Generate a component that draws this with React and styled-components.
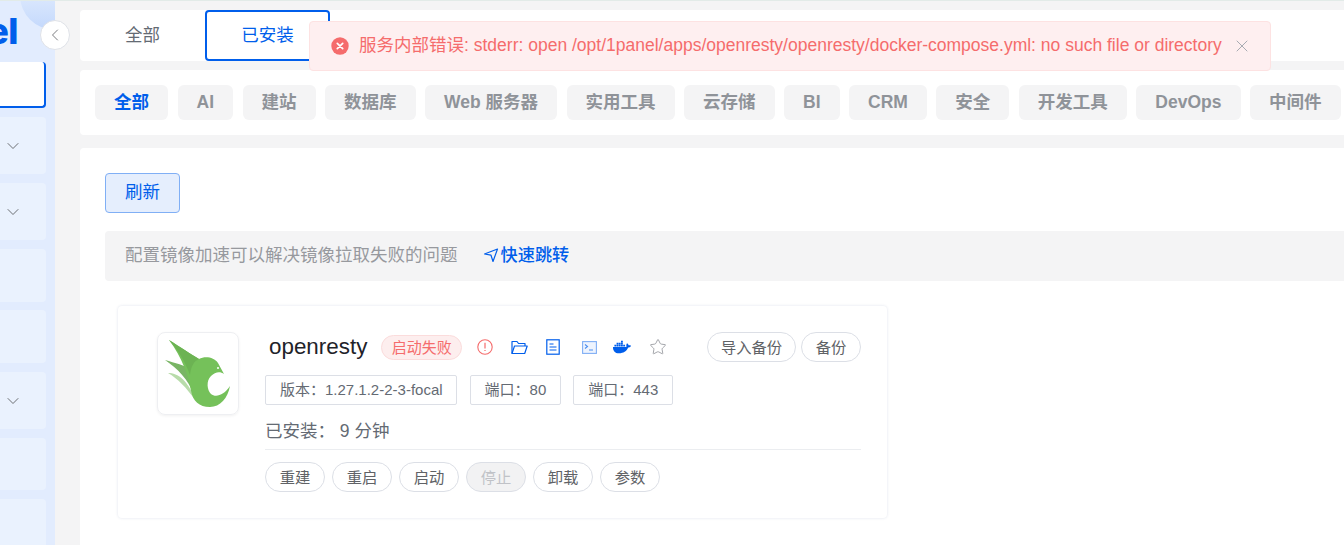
import React from 'react';
import styled, { createGlobalStyle } from 'styled-components';
import { ChevronDown, ChevronLeft, X, Star } from 'lucide-react';
import { FaDocker } from 'react-icons/fa';

const Global = createGlobalStyle`
  html, body { margin: 0; padding: 0; height: 100%; overflow: hidden; }
  body { font-family: "Liberation Sans", "Noto Sans CJK SC", sans-serif; background: #f4f4f5; }
  * { box-sizing: border-box; }
`;

const Page = styled.div`
  width: 1344px; height: 545px; display: flex; overflow: hidden; position: relative;
  border-top: 1px solid #e2ebe8; background: #f4f4f5;
`;
const Sidebar = styled.aside`
  width: 55px; flex: none; background: #e2ecfe; display: flex; flex-direction: column;
  padding-right: 9px; position: relative; overflow: hidden;
`;
const LogoBlob = styled.div`
  position: absolute; width: 70px; height: 70px; border-radius: 50%; left: 20px; top: -41px;
  background: linear-gradient(180deg, #e6effe 30%, #c3d8fc 100%);
`;
const LogoText = styled.div`
  height: 61px; flex: none; width: 18px; padding-top: 8px; font: 800 36px/44px "Inter", sans-serif; color: #005eeb;
  display: flex; justify-content: flex-end; letter-spacing: -0.5px; position: relative; white-space: nowrap;
`;
const Menu = styled.div`display: flex; flex-direction: column;`;
const MenuItem = styled.div`
  height: ${p => p.$h}px; margin-bottom: ${p => p.$gap}px; flex: none;
  background: ${p => p.$active ? '#fff' : '#eaf2fe'};
  border: ${p => p.$active ? '2px solid #005eeb' : '0'}; border-left: 0; border-top: 0;
  border-radius: 0 4px 4px 0; display: flex; align-items: center; justify-content: flex-end;
  padding-right: 23px; color: #606266;
`;
const Collapse = styled.div`
  position: absolute; left: 40px; top: 19px; width: 30px; height: 30px; border-radius: 50%;
  background: #fff; border: 1px solid #dfe2e8; display: flex; align-items: center; justify-content: center;
  color: #606266; z-index: 3;
`;
const Main = styled.main`
  flex: 1; min-width: 0; padding: 9px 0 0 25px; display: flex; flex-direction: column; gap: 9px;
`;
const TabCard = styled.div`
  height: 51px; flex: none; background: #fff; border-radius: 4px 0 0 4px; display: flex;
`;
const Tab = styled.div`
  width: 125px; height: 51px; display: flex; align-items: center; justify-content: center; font-size: 17.5px; padding-bottom: 5px;
  color: ${p => p.$active ? '#005eeb' : '#646a73'}; border-radius: 4px;
  border: ${p => p.$active ? '2px solid #005eeb' : '0'};
`;
const FilterCard = styled.div`
  height: 65px; flex: none; background: #fff; border-radius: 4px 0 0 4px; display: flex; align-items: center;
  gap: 9.5px; padding: 0 0 0 15px; overflow: hidden;
`;
const Pill = styled.div`
  height: 35px; flex: none; padding: 0 19px ${p => p.$latin ? 0 : 4}px; border-radius: 6px; background: #f4f4f5;
  color: ${p => p.$active ? '#005eeb' : '#8f9399'}; font-size: 17.5px; font-weight: 700;
  display: flex; align-items: center;
`;
const Content = styled.div`
  flex: 1; margin-top: 4px; background: #fff; border-radius: 4px 0 0 0; padding: 25px 0 0 25px;
`;
const Refresh = styled.button`
  display: block; width: 75px; height: 40px; background: #e5eefd; border: 1px solid #80aff5; border-radius: 4px;
  color: #005eeb; font: 17.5px "Liberation Sans", "Noto Sans CJK SC", sans-serif; padding: 0 0 6px;
`;
const Notice = styled.div`
  margin-top: 18px; height: 50px; background: #f4f4f5; border-radius: 4px 0 0 4px; display: flex; align-items: center;
  padding: 0 0 6px 20px; font-size: 17.5px; color: #97999e;
`;
const JumpLink = styled.span`
  margin-left: 25px; color: #005eeb; display: flex; align-items: center; font-size: 17.2px; font-weight: 500; font-family: "Noto Sans CJK SC", sans-serif;
`;
const AppCard = styled.div`
  margin: 25px 0 0 13px; width: 769px; height: 212px; background: #fff; border-radius: 4px;
  box-shadow: 0 0 3px rgba(30, 60, 120, .14); display: flex; padding: 26px 26px 0 39px;
`;
const IconBox = styled.div`
  width: 82px; height: 83px; flex: none; border: 1px solid #eeeff2; border-radius: 8px; box-shadow: 0 1px 3px rgba(0,0,0,.06);
  display: flex; align-items: center; justify-content: center;
`;
const Info = styled.div`flex: 1; margin-left: 26px; display: flex; flex-direction: column;`;
const TitleRow = styled.div`display: flex; align-items: center; height: 30px;`;
const Name = styled.div`font-size: 22.4px; color: #1f2329; margin: 0 14px 0 4px; line-height: 28px;`;
const Status = styled.div`
  height: 25px; width: 81px; border-radius: 13px; background: #fdeeee; border: 1px solid #fbdcdc; color: #f56c6c;
  font-size: 15px; display: flex; align-items: center; justify-content: center; flex: none; margin-right: 14px; padding-bottom: 2px;
`;
const IconSlot = styled.span`
  width: 18px; height: 18px; display: flex; align-items: center; justify-content: center; margin-right: ${p => p.$gap ?? 16}px; flex: none;
`;
const Spacer = styled.div`flex: 1;`;
const RoundBtn = styled.div`
  height: 30px; width: ${p => p.$w ?? 60}px; border-radius: 15px; border: 1px solid #dcdfe6; display: flex; align-items: center; justify-content: center;
  font-size: 15.3px; flex: none; padding-bottom: 2px;
  color: ${p => p.$disabled ? '#c0c2c7' : '#606266'}; background: ${p => p.$disabled ? '#f2f2f3' : '#fff'};
`;
const BtnGroup = styled.div`display: flex; gap: ${p => p.$gap ?? 7}px;`;
const TagRow = styled.div`display: flex; gap: 12.5px; margin-top: 13px;`;
const Tag = styled.div`
  height: 30px; padding: 0 13.5px 4px 14px; border: 1px solid #dcdfe6; border-radius: 2px; font-size: 15px; color: #646a73;
  display: flex; align-items: center; background: #fff; white-space: nowrap;
`;
const Installed = styled.div`
  margin-top: 15px; height: 30px; font-size: 17.5px; color: #646a73; border-bottom: 1px solid #ebedf0; white-space: pre; line-height: 22px;
`;
const Actions = styled(BtnGroup)`margin-top: 12px;`;
const Toast = styled.div`
  position: absolute; left: 309px; top: 20px; width: 962px; height: 50px; background: #feeff0; border: 1px solid #fde2e2; border-radius: 4px;
  display: flex; align-items: center; padding: 0 0 0 21px; color: #f56c6c; font-size: 17.5px; z-index: 5;
`;
const ToastText = styled.span`margin: 0 0 5px 10px; white-space: nowrap;`;
const ToastClose = styled.span`margin-left: 10px; color: #a8abb2; display: flex;`;

const ErrorDot = () => (
  <svg width="18" height="18" viewBox="0 0 18 18" style={{ flex: 'none' }}>
    <circle cx="9" cy="9" r="8.7" fill="#f56c6c" />
    <path d="M6.3 6.3l5.4 5.4M11.7 6.3l-5.4 5.4" stroke="#fff" strokeWidth="1.7" strokeLinecap="round" />
  </svg>
);
const Warn = () => (
  <svg width="16" height="16" viewBox="0 0 16 16" fill="none">
    <circle cx="8" cy="8" r="7.2" stroke="#f56c6c" strokeWidth="1.1" />
    <path d="M8 3.8v5.6M8 11v1.1" stroke="#f56c6c" strokeWidth="1.2" />
  </svg>
);
const Folder = () => (
  <svg width="17" height="15" viewBox="0 0 17 15" fill="none" stroke="#005eeb" strokeWidth="1.2" strokeLinejoin="round">
    <path d="M1 13.5V1.5h5l1.5 2h6.5v2.5" />
    <path d="M1 13.5L3.5 6h12.7l-2.5 7.5z" />
  </svg>
);
const Doc = () => (
  <svg width="14" height="16" viewBox="0 0 14 16" fill="none" stroke="#005eeb" strokeWidth="1.2">
    <rect x=".8" y=".8" width="12.4" height="14.4" />
    <path d="M3.5 5h4M3.5 8h7M3.5 11h7" />
  </svg>
);
const Term = () => (
  <svg width="15" height="13" viewBox="0 0 15 13" fill="#eef4fe" stroke="#80aff5" strokeWidth="1.1">
    <rect x=".6" y=".6" width="13.8" height="11.8" />
    <path d="M3 3.5l2.5 2L3 7.5M7 9h4" fill="none" stroke="#4d8ff0" />
  </svg>
);
const Send = () => (
  <svg width="16" height="16" viewBox="0 0 16 16" fill="none" stroke="#005eeb" strokeWidth="1.2" strokeLinejoin="round" style={{ marginRight: 2, marginTop: 4 }}>
    <path d="M1.5 7L14.5 2 10 14.5 8 8.2z" />
  </svg>
);
const Bird = () => (
  <svg width="80" height="81" viewBox="0 0 80 81">
    <path d="M10 40 C20 40 30 47 37 67 C28 54 20 46 10 40Z" fill="#b8dcaa" />
    <path d="M7 27 C17 30 27 32 33 37 C36 46 36 54 36 62 C30 46 20 36 7 27Z" fill="#79b565" />
    <path d="M11 7 C22 14 33 21 41 26 C47 23 56 24 60 30 L66 41 C62 38 57 39 53 43 C48 48 49 57 53 61 C58 65 66 62 72 53 C70 65 62 74 52 74 C41 74 35 68 33 58 C31 44 24 24 11 7Z" fill="#75c15a" />
    <path d="M11 7 C22 14 33 21 41 26 C36 28 33 33 32 42 C28 30 20 17 11 7Z" fill="#6cb353" />
    <circle cx="60" cy="35" r="1" fill="#fff" />
  </svg>
);

const menu = [
  [46, 9, true, false], [57, 9, false, true], [57, 9, false, true], [53, 8, false, false],
  [53, 9, false, false], [57, 9, false, true], [52, 9, false, false], [60, 0, false, false],
];
const pills = [['全部', true], ['AI', false, true], ['建站'], ['数据库'], ['Web 服务器'], ['实用工具'], ['云存储'], ['BI', false, true], ['CRM', false, true], ['安全'], ['开发工具'], ['DevOps', false, true], ['中间件']];
const blue = '#005eeb';

export default function App() {
  return (
    <Page>
      <Global />
      <Sidebar>
        <LogoBlob />
        <LogoText>el</LogoText>
        <Menu>
          {menu.map(([h, g, a, c], i) => (
            <MenuItem key={i} $h={h} $gap={g} $active={a}>{c && <ChevronDown size={20} strokeWidth={1.1} />}</MenuItem>
          ))}
        </Menu>
      </Sidebar>
      <Collapse><ChevronLeft size={20} strokeWidth={1} /></Collapse>
      <Main>
        <TabCard>
          <Tab>全部</Tab>
          <Tab $active>已安装</Tab>
        </TabCard>
        <FilterCard>
          {pills.map(([t, a, l]) => <Pill key={t} $active={a} $latin={l}>{t}</Pill>)}
        </FilterCard>
        <Content>
          <Refresh>刷新</Refresh>
          <Notice>配置镜像加速可以解决镜像拉取失败的问题<JumpLink><Send />快速跳转</JumpLink></Notice>
          <AppCard>
            <IconBox><Bird /></IconBox>
            <Info>
              <TitleRow>
                <Name>openresty</Name>
                <Status>启动失败</Status>
                <IconSlot><Warn /></IconSlot>
                <IconSlot><Folder /></IconSlot>
                <IconSlot $gap={18}><Doc /></IconSlot>
                <IconSlot $gap={15}><Term /></IconSlot>
                <IconSlot $gap={18}><FaDocker size={20} color={blue} /></IconSlot>
                <IconSlot $gap={0}><Star size={18} color="#909399" strokeWidth={1.1} /></IconSlot>
                <Spacer />
                <BtnGroup $gap={5}>
                  <RoundBtn $w={89}>导入备份</RoundBtn>
                  <RoundBtn>备份</RoundBtn>
                </BtnGroup>
              </TitleRow>
              <TagRow>
                <Tag>版本：1.27.1.2-2-3-focal</Tag>
                <Tag>端口：80</Tag>
                <Tag>端口：443</Tag>
              </TagRow>
              <Installed>已安装： 9 分钟</Installed>
              <Actions>
                <RoundBtn>重建</RoundBtn>
                <RoundBtn>重启</RoundBtn>
                <RoundBtn>启动</RoundBtn>
                <RoundBtn $disabled>停止</RoundBtn>
                <RoundBtn>卸载</RoundBtn>
                <RoundBtn>参数</RoundBtn>
              </Actions>
            </Info>
          </AppCard>
        </Content>
      </Main>
      <Toast>
        <ErrorDot />
        <ToastText>服务内部错误: stderr: open /opt/1panel/apps/openresty/openresty/docker-compose.yml: no such file or directory</ToastText>
        <ToastClose><X size={20} strokeWidth={1.2} /></ToastClose>
      </Toast>
    </Page>
  );
}
